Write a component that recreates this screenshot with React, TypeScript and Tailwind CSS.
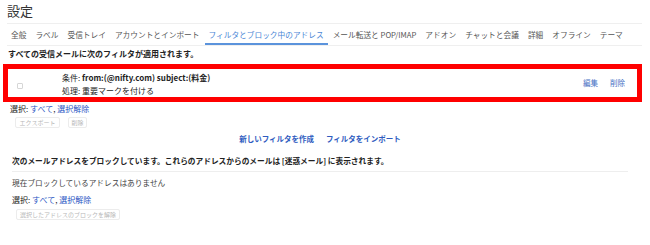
import React from "react";

const tabs = [
  "全般",
  "ラベル",
  "受信トレイ",
  "アカウントとインポート",
  "フィルタとブロック中のアドレス",
  "メール転送と POP/IMAP",
  "アドオン",
  "チャットと会議",
  "詳細",
  "オフライン",
  "テーマ",
];

const activeTab = "フィルタとブロック中のアドレス";

function SelectLine() {
  return (
    <div className="text-[8px] leading-[12px] text-[#222]">
      選択: <span className="text-[#2b56c4]">すべて</span>,{" "}
      <span className="text-[#2b56c4]">選択解除</span>
    </div>
  );
}

function GhostButton({ label, className = "" }: { label: string; className?: string }) {
  return (
    <div
      className={`flex h-[11px] items-center justify-center rounded-[2px] border border-[#ececec] text-[6px] leading-none text-[#b8b8b8] ${className}`}
    >
      {label}
    </div>
  );
}

export default function App() {
  return (
    <div
      className="h-[245px] w-[650px] overflow-hidden bg-white text-[#222]"
      style={{ fontFamily: '"Noto Sans CJK JP", "Noto Sans", sans-serif' }}
    >
      {/* Title */}
      <div className="h-[23px] pl-[7px] pt-[2px] text-[13px] leading-[18px] text-[#333]">設定</div>

      {/* Tabs */}
      <div className="mx-[7px] flex h-[23px] w-[635px] gap-[1px] border-y border-[#efefef]">
        {tabs.map((t) => (
          <div
            key={t}
            className={`flex items-center whitespace-nowrap px-[4px] text-[7.7px] ${
              t === activeTab
                ? "border-b-2 border-[#5b93dc] pt-[2px] text-[#4a86d6]"
                : "text-[#555]"
            }`}
          >
            {t}
          </div>
        ))}
      </div>

      <div className="px-[8px]">
        {/* Filters section */}
        <div className="mt-[2px] text-[8px] font-bold leading-[12px]">
          すべての受信メールに次のフィルタが適用されます。
        </div>

        <div className="ml-[-5px] mt-[4px] flex h-[38px] w-[639px] items-center border-[5px] border-[#ff0000]">
          <div className="ml-[9px] mt-[5px] h-[6px] w-[6px] rounded-[1px] border border-[#d6d6d6]" />
          <div className="ml-[39px] mt-[1px] flex flex-col text-[8px] leading-[13px]">
            <div>
              条件: <span className="font-bold">from:(@nifty.com) subject:(料金)</span>
            </div>
            <div>処理: 重要マークを付ける</div>
          </div>
          <div className="ml-auto flex gap-[12px] pr-[12px] text-[7.5px] text-[#4670c4]">
            <span>編集</span>
            <span>削除</span>
          </div>
        </div>

        <div className="ml-[2px] mt-[1px]">
          <SelectLine />
        </div>
        <div className="mt-[2px] flex gap-[8px] pl-[7px]">
          <GhostButton label="エクスポート" className="w-[45px]" />
          <GhostButton label="削除" className="w-[19px]" />
        </div>

        <div className="mt-[5px] flex justify-center gap-[12px] pr-[10px] text-[7.5px] font-bold leading-[12px] text-[#2f5cc0]">
          <span>新しいフィルタを作成</span>
          <span>フィルタをインポート</span>
        </div>

        {/* Blocked addresses section */}
        <div className="ml-[4px] mr-[14px] mt-[10px] border-b border-[#eeeeee] pb-[4px] text-[7.7px] font-bold leading-[12px]">
          次のメールアドレスをブロックしています。これらのアドレスからのメールは [迷惑メール] に表示されます。
        </div>
        <div className="ml-[4px] mt-[5px] text-[7.7px] leading-[12px] text-[#444]">
          現在ブロックしているアドレスはありません
        </div>
        <div className="ml-[4px] mt-[5px]">
          <SelectLine />
        </div>
        <div className="mt-[3px] pl-[8px]">
          <GhostButton label="選択したアドレスのブロックを解除" className="w-[104px]" />
        </div>
      </div>
    </div>
  );
}
